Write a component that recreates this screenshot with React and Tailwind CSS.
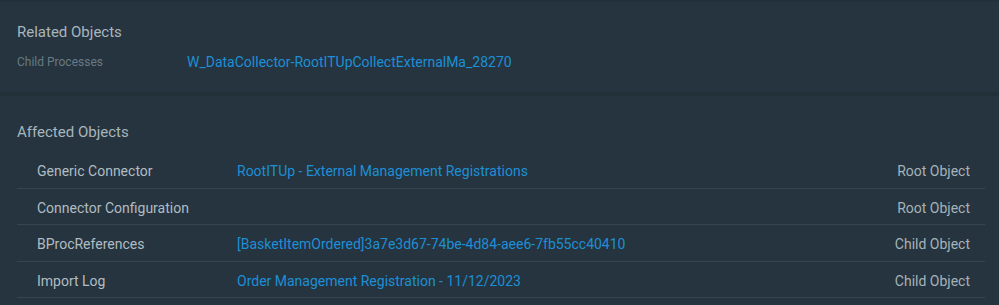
import React from "react";

const AFFECTED = [
  { name: "Generic Connector", link: "RootITUp - External Management Registrations", type: "Root Object" },
  { name: "Connector Configuration", link: "", type: "Root Object" },
  { name: "BProcReferences", link: "[BasketItemOrdered]3a7e3d67-74be-4d84-aee6-7fb55cc40410", type: "Child Object" },
  { name: "Import Log", link: "Order Management Registration - 11/12/2023", type: "Child Object" },
];

export default function App() {
  return (
    <div
      className="w-[999px] h-[305px] overflow-hidden bg-[#22303a] pt-[2px]"
      style={{ fontFamily: "Roboto, 'Liberation Sans', sans-serif" }}
    >
      {/* Related Objects */}
      <section className="bg-[#25343e] h-[90px] px-[17px] pt-[20px]">
        <h2 className="text-[15px] leading-[20px] text-[#a9b5bc]">Related Objects</h2>
        <div className="flex items-center mt-[10px] h-[20px]">
          <span className="w-[170px] text-[12px] text-[#687a84]">Child Processes</span>
          <a className="text-[14px] text-[#1e8fd6]">W_DataCollector-RootITUpCollectExternalMa_28270</a>
        </div>
      </section>

      {/* Affected Objects */}
      <section className="bg-[#25343e] mt-[4px] px-[17px] pt-[26px] h-[300px]">
        <h2 className="text-[15px] leading-[20px] text-[#a9b5bc]">Affected Objects</h2>
        <div className="mt-[10px] mr-[-3px]">
          {AFFECTED.map((r) => (
            <div
              key={r.name}
              className="flex items-center h-[36.5px] border-b border-[#34464f] pl-[20px] pr-[15px] pt-[4px] text-[14px]"
            >
              <span className="w-[200px] text-[#b1bcc3]">{r.name}</span>
              <span className="flex-1 text-[#1e8fd6]">{r.link}</span>
              <span className="text-[#a7b2b9]">{r.type}</span>
            </div>
          ))}
        </div>
      </section>
    </div>
  );
}
